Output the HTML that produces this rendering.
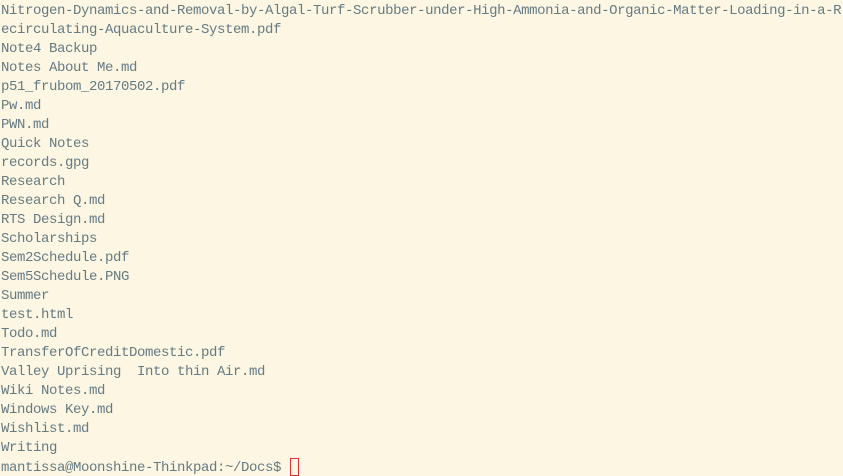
<!DOCTYPE html>
<html><head><meta charset="utf-8"><style>
html,body{margin:0;padding:0;background:#fdf6e3;width:843px;height:476px;overflow:hidden}
pre{margin:0;padding:2px 0 0 1px;font-family:"Liberation Mono","DejaVu Sans Mono",monospace;font-size:14px;letter-spacing:-0.4px;line-height:19px;color:#657b83;white-space:pre}
.c{display:inline-block;width:9px;height:18px;border:1px solid #dc322f;box-sizing:border-box;vertical-align:-5px;margin-left:1px}
</style></head><body><pre>Nitrogen-Dynamics-and-Removal-by-Algal-Turf-Scrubber-under-High-Ammonia-and-Organic-Matter-Loading-in-a-R
ecirculating-Aquaculture-System.pdf
Note4 Backup
Notes About Me.md
p51_frubom_20170502.pdf
Pw.md
PWN.md
Quick Notes
records.gpg
Research
Research Q.md
RTS Design.md
Scholarships
Sem2Schedule.pdf
Sem5Schedule.PNG
Summer
test.html
Todo.md
TransferOfCreditDomestic.pdf
Valley Uprising  Into thin Air.md
Wiki Notes.md
Windows Key.md
Wishlist.md
Writing
mantissa@Moonshine-Thinkpad:~/Docs$ <span class="c"></span></pre></body></html>
